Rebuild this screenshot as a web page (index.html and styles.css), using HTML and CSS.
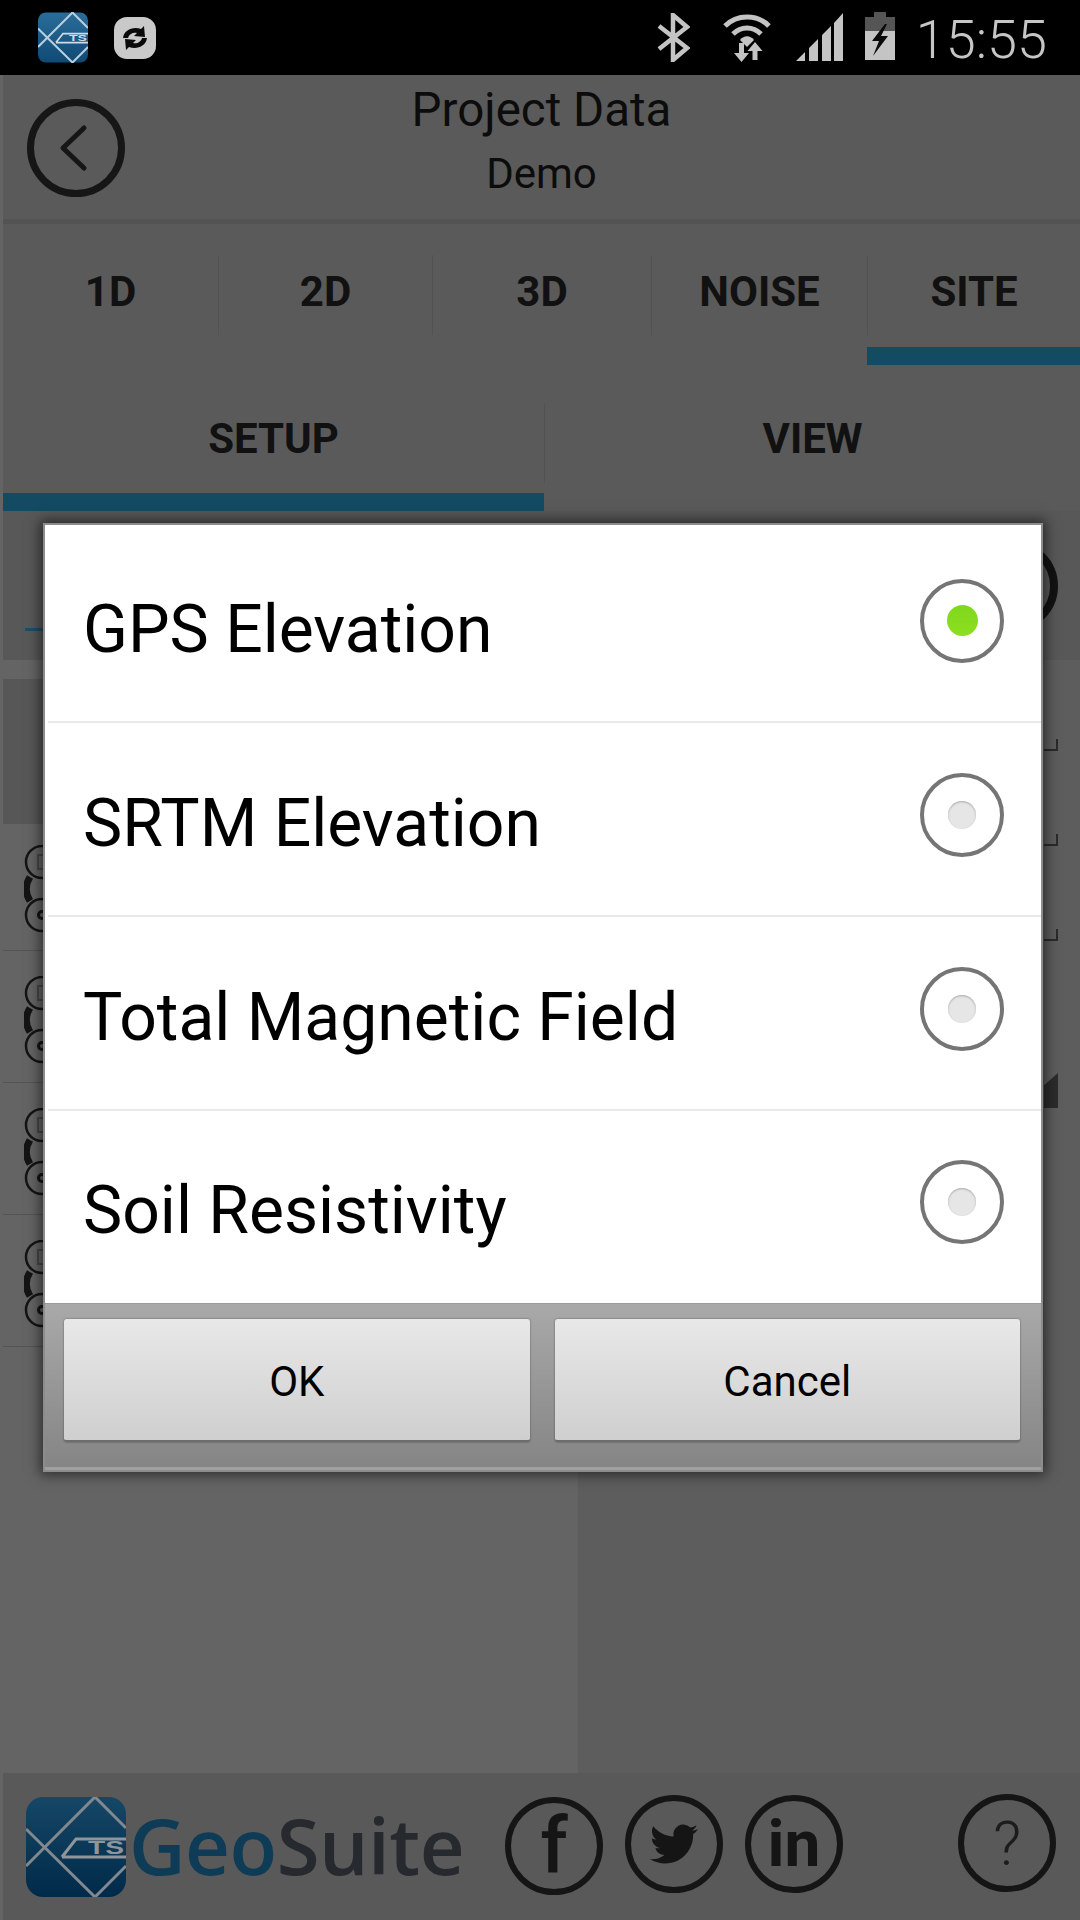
FILE: index.html
```html
<!DOCTYPE html>
<html lang="en">
<head>
  <meta charset="UTF-8" />
  <meta name="viewport" content="width=device-width, initial-scale=1.0"/>
  <title>GeoSuite - Project Data</title>
  <link rel="stylesheet" href="styles.css">
</head>
<body>
  <div class="statusbar">
    <svg class="st-logo" viewBox="0 0 100 100">
      <defs>
        <linearGradient id="tileBright" x1="0" y1="0" x2="0" y2="1">
          <stop offset="0" stop-color="#2a6d9a"/>
          <stop offset="1" stop-color="#0e4a74"/>
        </linearGradient>
      </defs>
      <rect width="100" height="100" rx="16" fill="url(#tileBright)"/>
      <path d="M69 0L0 69M0 32L69 100L100 69M69 0L100 31" fill="none" stroke="#b9cfe0" stroke-width="4"/>
      <path d="M36 60L50 42H100M36 60H100" fill="none" stroke="#cfdce6" stroke-width="3.500"/>
      <text class="logo-mark" x="62" y="57" textLength="36" lengthAdjust="spacingAndGlyphs" fill="#cfdce6">TS</text>
    </svg>
    <svg class="st-sync" viewBox="0 0 42 42">
      <rect width="42" height="42" rx="13" fill="#c9c9c9"/>
      <path d="M9 21C10 13 19 9 27 12L30 9L31 20L20 19L23 16C19 15 15 17 14 21z" fill="#0a0a0a"/>
      <path d="M33 21C32 29 23 33 15 30L12 33L11 22L22 23L19 26C23 27 27 25 28 21z" fill="#0a0a0a"/>
    </svg>
    <div class="st-right">
      <svg class="st-bt" viewBox="0 0 33 49">
        <path d="M2 13L30 35L16 47V2L30 14L2 36" fill="none" stroke="#c4c4c4" stroke-width="4.500"/>
      </svg>
      <svg class="st-wifi" viewBox="0 0 50 52">
        <path d="M3 16C15 4 35 4 47 16M11 24C19 16 31 16 39 24" fill="none" stroke="#c4c4c4" stroke-width="5"/>
        <path d="M18 30C22 25 28 25 32 30L25 37z" fill="#c4c4c4"/>
        <path d="M17 33h5v10h5l-7.500 9-7.500-9h5z" fill="#c4c4c4"/>
        <path d="M33 32l7.500 9h-5v9h-5v-9h-5z" fill="#c4c4c4"/>
      </svg>
      <svg class="st-signal" viewBox="0 0 47 48">
        <path d="M0 48L9 39V48zM13 35L22 26V48H13zM26 22L35 13V48H26zM38 10L47 0V48H38z" fill="#c4c4c4"/>
      </svg>
      <svg class="st-batt" viewBox="0 0 30 48">
        <path d="M9 0h12v5h9v14H0V5h9z" fill="#555"/>
        <rect y="19" width="30" height="29" fill="#c4c4c4"/>
        <path d="M20 12L7 29h7L8 44L23 24h-7l6-12z" fill="#0a0a0a"/>
      </svg>
      <span class="st-time">15:55</span>
    </div>
  </div>

  <div class="app">
    <header class="topbar">
      <svg class="back" viewBox="0 0 98 98">
        <circle cx="49" cy="49" r="45.500" fill="none" stroke="#161616" stroke-width="7"/>
        <path d="M57 29L36 49L57 69" fill="none" stroke="#161616" stroke-width="5" stroke-linecap="round" stroke-linejoin="round"/>
      </svg>
      <div class="titles">
        <div class="title">Project Data</div>
        <div class="subtitle">Demo</div>
      </div>
    </header>

    <nav class="tabs">
      <div class="tab"><span class="tab-label">1D</span></div>
      <div class="tab"><span class="tab-label">2D</span></div>
      <div class="tab"><span class="tab-label">3D</span></div>
      <div class="tab"><span class="tab-label">NOISE</span></div>
      <div class="tab tab-on"><span class="tab-label">SITE</span></div>
    </nav>

    <nav class="subtabs">
      <div class="subtab subtab-on"><span class="subtab-label">SETUP</span></div>
      <div class="subtab"><span class="subtab-label">VIEW</span></div>
    </nav>

    <section class="panel">
      <div class="col-left">
        <div class="field"><span class="field-line"></span></div>
        <div class="field-two"></div>
        <div class="row row-first"><svg class="spool" viewBox="0 0 22 88"><use href="#spool"/></svg></div>
        <div class="row"><svg class="spool" viewBox="0 0 22 88"><use href="#spool"/></svg></div>
        <div class="row"><svg class="spool" viewBox="0 0 22 88"><use href="#spool"/></svg></div>
        <div class="row"><svg class="spool" viewBox="0 0 22 88"><use href="#spool"/></svg></div>
      </div>
      <div class="col-right">
        <div class="right-head"><span class="ring"></span></div>
        <div class="right-list">
          <span class="tick"></span>
          <span class="tick"></span>
          <span class="tick"></span>
          <span class="wedge"></span>
        </div>
      </div>
    </section>

    <footer class="footer">
      <svg class="foot-logo" viewBox="0 0 100 100">
        <defs>
          <linearGradient id="tileDim" x1="0" y1="0" x2="0" y2="1">
            <stop offset="0" stop-color="#164766"/>
            <stop offset="1" stop-color="#002a4a"/>
          </linearGradient>
        </defs>
        <rect width="100" height="100" rx="17" fill="url(#tileDim)"/>
        <path d="M69 0L0 69M0 32L69 100L100 69M69 0L100 31" fill="none" stroke="#83888e" stroke-width="3"/>
        <path d="M36 60L50 42H100M36 60H100" fill="none" stroke="#8f959a" stroke-width="3"/>
        <text class="logo-mark" x="62" y="57" textLength="36" lengthAdjust="spacingAndGlyphs" fill="#8f959a">TS</text>
      </svg>
      <div class="brand"><span class="brand-geo">Geo</span><span class="brand-suite">Suite</span></div>
      <span class="circle circle-f">f</span>
      <span class="circle circle-tw">
        <svg class="bird" viewBox="0 0 24 24"><path d="M23.953 4.57a10 10 0 01-2.825.775 4.958 4.958 0 002.163-2.723c-.951.555-2.005.959-3.127 1.184a4.92 4.92 0 00-8.384 4.482C7.69 8.095 4.067 6.13 1.64 3.162a4.822 4.822 0 00-.666 2.475c0 1.71.87 3.213 2.188 4.096a4.904 4.904 0 01-2.228-.616v.06a4.923 4.923 0 003.946 4.827 4.996 4.996 0 01-2.212.085 4.936 4.936 0 004.604 3.417 9.867 9.867 0 01-6.102 2.105c-.39 0-.779-.023-1.17-.067a13.995 13.995 0 007.557 2.209c9.053 0 13.998-7.496 13.998-13.985 0-.21 0-.42-.015-.63A9.935 9.935 0 0024 4.59z"/></svg>
      </span>
      <span class="circle circle-in">in</span>
      <span class="circle circle-help">?</span>
    </footer>
  </div>

  <svg class="defs-only" width="0" height="0">
    <defs>
      <g id="spool" fill="none" stroke="#141414">
        <circle cx="18" cy="17" r="16" stroke-width="2.500"/>
        <rect x="14" y="10" width="12" height="14" stroke="#484848" stroke-width="2"/>
        <path d="M6 32C1 40 1 48 6 56" stroke-width="7"/>
        <circle cx="18" cy="70" r="16" stroke-width="2.500"/>
        <circle cx="18" cy="70" r="3.500" stroke-width="3"/>
      </g>
    </defs>
  </svg>

  <div class="dialog">
    <div class="options">
      <div class="option"><span>GPS Elevation</span><span class="radio radio-on"><i></i></span></div>
      <div class="option"><span>SRTM Elevation</span><span class="radio"><i></i></span></div>
      <div class="option"><span>Total Magnetic Field</span><span class="radio"><i></i></span></div>
      <div class="option"><span>Soil Resistivity</span><span class="radio"><i></i></span></div>
    </div>
    <div class="actions">
      <div class="btn">OK</div>
      <div class="btn">Cancel</div>
    </div>
  </div>
</body>
</html>
```

FILE: styles.css
```css
html, body { margin: 0; padding: 0; }
body { position: relative; width: 1080px; height: 1920px; overflow: hidden; background: #5a5a5a; font-family: Roboto, "Liberation Sans", sans-serif; color: #0c0c0c; }

/* status bar */
.statusbar { height: 75px; background: #000; display: flex; align-items: flex-start; position: relative; }
.st-logo { width: 50px; height: 51px; margin: 12px 0 0 38px; }
.st-sync { width: 42px; height: 42px; margin: 17px 0 0 26px; }
.st-right { margin-left: auto; display: flex; align-items: flex-start; padding-right: 33px; }
.st-bt { width: 33px; height: 49px; margin-top: 13px; }
.st-wifi { width: 50px; height: 52px; margin: 10px 0 0 32px; }
.st-signal { width: 47px; height: 48px; margin: 13px 0 0 24px; }
.st-batt { width: 30px; height: 48px; margin: 12px 0 0 22px; }
.st-time { font-weight: 300; font-size: 54px; line-height: 80px; color: #c6c6c6; margin-left: 21px; }
.logo-mark { font-family: "Liberation Sans", sans-serif; font-weight: 700; font-size: 19px; }

/* page behind the dialog */
.app { height: 1845px; display: flex; flex-direction: column; border-left: 3px solid #646464; }
.topbar { height: 144px; border-bottom: 5px solid #535353; display: flex; justify-content: center; position: relative; flex: none; }
.back { position: absolute; left: 24px; top: 24px; width: 98px; height: 98px; }
.titles { text-align: center; }
.title { font-size: 47.500px; line-height: 52px; margin-top: 9px; }
.subtitle { font-size: 42px; line-height: 46px; margin-top: 15px; }

.tabs { display: grid; grid-template-columns: 215px 214px 219px 216px 213px; flex: none; height: 141px; }
.tab { padding-top: 31px; }
.tab-on { border-bottom: 18px solid #134b62; height: 92px; padding-top: 31px; box-sizing: content-box; }
.tab-label { display: flex; height: 72px; padding-bottom: 8px; align-items: center; justify-content: center; font-weight: 700; font-size: 42px; color: #111; }
.tab + .tab .tab-label { border-left: 1px solid #525252; }

.subtabs { display: grid; grid-template-columns: 541px 1fr; flex: none; height: 146px; }
.subtab { padding-top: 38px; }
.subtab-on { border-bottom: 18px solid #134b62; height: 90px; }
.subtab-label { display: flex; height: 70px; padding-bottom: 10px; align-items: center; justify-content: center; font-weight: 700; font-size: 42px; color: #111; }
.subtab + .subtab .subtab-label { border-left: 1px solid #525252; }

.panel { flex: 1; display: grid; grid-template-columns: 575px 1fr; min-height: 0; }
.col-left { background: #646464; }
.col-right { background: #5d5d5d; }

.field { height: 149px; background: #585858; display: flex; align-items: flex-end; }
.field-line { width: 22px; height: 3px; background: #1c4f63; margin: 0 0 29px 22px; }
.field-two { height: 145px; margin-top: 19px; background: #575757; }
.row { height: 132px; box-sizing: border-box; padding: 25px 0 0 21px; border-bottom: 1px solid #545454; }
.row-first { height: 127px; padding-top: 21px; }
.spool { display: block; width: 22px; height: 88px; }
.defs-only { position: absolute; }

.right-head { height: 149px; background: #585858; display: flex; justify-content: flex-end; }
.ring { width: 76px; height: 76px; border: 8px solid #121212; border-radius: 50%; margin: 29px 22px 0 0; }
.right-list { display: flex; flex-direction: column; align-items: flex-end; gap: 83px; padding: 79px 22px 0 0; }
.tick { width: 12px; height: 10px; border-right: 2px solid #2b2b2b; border-bottom: 2px solid #2b2b2b; }
.wedge { width: 14px; height: 35px; margin-top: 49px; background: #2c2c2c; clip-path: polygon(0 35%, 100% 0, 100% 100%, 0 100%); }

/* footer */
.footer { flex: none; height: 147px; background: #595959; display: flex; align-items: flex-start; }
.foot-logo { width: 100px; height: 100px; margin: 24px 0 0 23px; flex: none; }
.brand { font-family: "Open Sans", sans-serif; font-weight: 600; font-size: 78px; line-height: 100px; margin: 22px 0 0 3px; letter-spacing: -.5px; width: 376px; flex: none; }
.brand-geo { color: #0e3b56; }
.brand-suite { color: #26292d; }
.circle { box-sizing: border-box; width: 98px; height: 98px; border: 6px solid #151515; border-radius: 50%; margin: 22px 22px 0 0; display: flex; align-items: center; justify-content: center; color: #151515; flex: none; }
.circle-f { font-weight: 500; font-size: 78px; margin-top: 24px; }
.circle-in { font-weight: 700; font-size: 64px; }
.circle-help { font-weight: 300; font-size: 62px; margin: 21px 0 0 93px; color: #1c1c1c; }
.bird { width: 48px; height: 48px; fill: #151515; }

/* dialog */
.dialog { position: absolute; left: 43px; top: 523px; width: 1000px; height: 949px; box-sizing: border-box; border: 2px solid #8c8c8c; background: #fff; box-shadow: 0 0 12px 3px rgba(0,0,0,.55); display: flex; flex-direction: column; }
.options { height: 778px; padding-top: 4px; box-sizing: border-box; flex: none; }
.option { height: 194px; box-sizing: border-box; margin-left: 3px; padding-right: 37px; padding-left: 35px; border-bottom: 2px solid #e8e8e8; display: flex; align-items: center; justify-content: space-between; font-size: 66px; color: #000; }
.option:last-child { border-bottom: 0; height: 190px; }
.option span:first-child { padding-top: 8px; }
.radio { width: 84px; height: 84px; box-sizing: border-box; border: 4px solid #757575; border-radius: 50%; display: flex; align-items: center; justify-content: center; margin-bottom: 9px; }
.radio i { width: 28px; height: 28px; border-radius: 50%; background: #e6e6e6; box-shadow: inset 0 1px 2px #aaa; }
.radio-on i { width: 31px; height: 31px; background: linear-gradient(#7fd81c, #8ede20); box-shadow: none; }
.actions { flex: 1; background: linear-gradient(#a9a9a9, #858585); border-top: 1px solid #999; border-bottom: 3px solid #a0a0a0; display: flex; gap: 25px; padding: 15px 21px 0 19px; }
.btn { width: 467px; height: 123px; padding-top: 4px; box-sizing: border-box; background: linear-gradient(#e8e8e8, #cfcfcf); border-radius: 3px; border-bottom: 2px solid #6c6c6c; box-shadow: 0 0 2px rgba(0,0,0,.5); display: flex; align-items: center; justify-content: center; font-size: 42px; color: #000; }
```
